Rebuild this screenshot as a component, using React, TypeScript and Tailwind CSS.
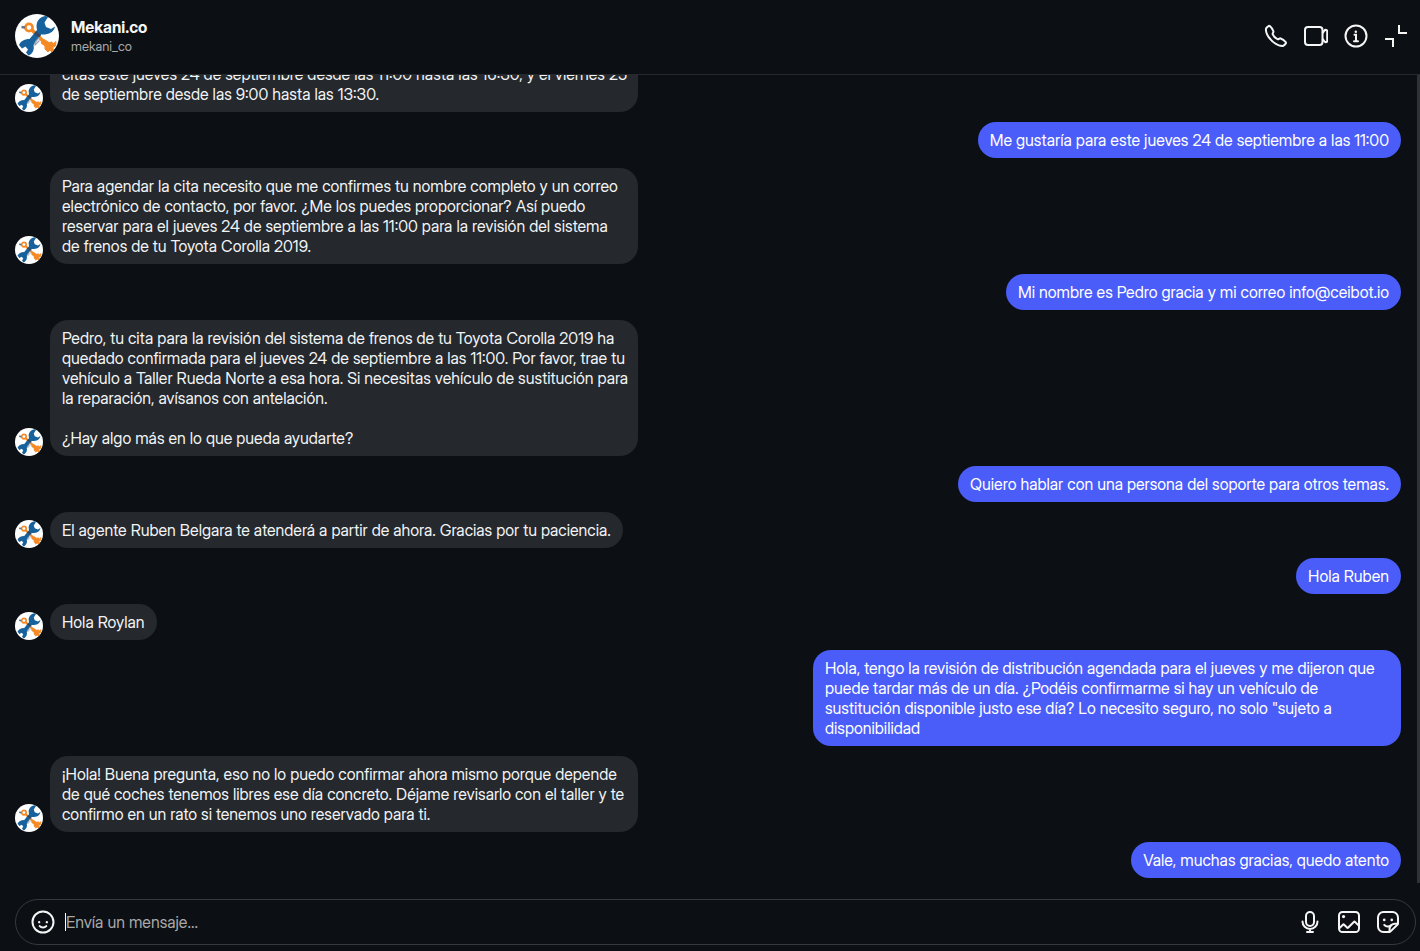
import React from "react";
import { clsx } from "clsx";

type Message = {
  from: "them" | "me";
  text: string;
  long?: boolean;
};

const messages: Message[] = [
  {
    from: "them",
    long: true,
    text: "citas este jueves 24 de septiembre desde las 11:00 hasta las 16:30, y el viernes 25\nde septiembre desde las 9:00 hasta las 13:30.",
  },
  { from: "me", text: "Me gustaría para este jueves 24 de septiembre a las 11:00" },
  {
    from: "them",
    long: true,
    text: "Para agendar la cita necesito que me confirmes tu nombre completo y un correo\nelectrónico de contacto, por favor. ¿Me los puedes proporcionar? Así puedo\nreservar para el jueves 24 de septiembre a las 11:00 para la revisión del sistema\nde frenos de tu Toyota Corolla 2019.",
  },
  { from: "me", text: "Mi nombre es Pedro gracia y mi correo info@ceibot.io" },
  {
    from: "them",
    long: true,
    text: "Pedro, tu cita para la revisión del sistema de frenos de tu Toyota Corolla 2019 ha\nquedado confirmada para el jueves 24 de septiembre a las 11:00. Por favor, trae tu\nvehículo a Taller Rueda Norte a esa hora. Si necesitas vehículo de sustitución para\nla reparación, avísanos con antelación.\n\n¿Hay algo más en lo que pueda ayudarte?",
  },
  { from: "me", text: "Quiero hablar con una persona del soporte para otros temas." },
  {
    from: "them",
    text: "El agente Ruben Belgara te atenderá a partir de ahora. Gracias por tu paciencia.",
  },
  { from: "me", text: "Hola Ruben" },
  { from: "them", text: "Hola Roylan" },
  {
    from: "me",
    long: true,
    text: 'Hola, tengo la revisión de distribución agendada para el jueves y me dijeron que\npuede tardar más de un día. ¿Podéis confirmarme si hay un vehículo de\nsustitución disponible justo ese día? Lo necesito seguro, no solo "sujeto a\ndisponibilidad',
  },
  {
    from: "them",
    long: true,
    text: "¡Hola! Buena pregunta, eso no lo puedo confirmar ahora mismo porque depende\nde qué coches tenemos libres ese día concreto. Déjame revisarlo con el taller y te\nconfirmo en un rato si tenemos uno reservado para ti.",
  },
  { from: "me", text: "Vale, muchas gracias, quedo atento" },
];

const Avatar = ({ className }: { className: string }) => (
  <svg viewBox="0 0 44 44" className={clsx("shrink-0 rounded-full bg-white", className)} aria-hidden="true">
    {/* orange wrench */}
    <g stroke="#f58a25" fill="none">
      <path d="M17 16 31 30" strokeWidth="3.5" />
      <circle cx="14" cy="13.5" r="3.6" strokeWidth="2.6" />
      <path d="M10 13.500 6.500 13" stroke="#6b7280" strokeWidth="2.5" />
      <path
        d="M26 29 29 25.500 34 28.500 37 28 38 30 41 27.500 40.500 32 37 34 39 35.500 37 38 35 36 33 38 30 35 30 32Z"
        fill="#f58a25"
        strokeWidth="1"
      />
    </g>
    {/* blue wrench */}
    <path
      d="M34 1.500C27 1.500 21.500 5.500 21.500 12L22 16 14.500 25C9 25 5.500 27.500 4 31L7 34.500 10.500 32.500 13 35.500 11 38.500 13.500 41.500C18 40 19.500 35 18.500 31L26 20.500C33 21 39 18.500 40 12.500L36 15 31 13 29.500 8.500Z"
      fill="#17629c"
    />
    <path d="M20 18.500 25 22.500" stroke="#37475a" strokeWidth="3" />
    <path d="M24.500 23C23 26 19 27 20 31L24.500 26.500" fill="none" stroke="#94a3b8" strokeWidth="1.3" />
  </svg>
);

const PhoneIcon = () => (
  <svg viewBox="0 0 24 24" className="size-6" fill="currentColor" aria-hidden="true">
    <path d="M18.227 22.912c-4.913 0-9.286-3.627-11.486-5.828C4.486 14.830.731 10.291.921 5.231a3.289 3.289 0 0 1 .908-2.138 17.116 17.116 0 0 1 1.865-1.710 2.307 2.307 0 0 1 3.004.174 13.283 13.283 0 0 1 3.658 5.325 2.551 2.551 0 0 1-.190 1.941l-.455.853a.463.463 0 0 0-.024.387 7.570 7.570 0 0 0 4.077 4.075.455.455 0 0 0 .386-.024l.853-.455a2.548 2.548 0 0 1 1.940-.190 13.278 13.278 0 0 1 5.326 3.658 2.309 2.309 0 0 1 .174 3.003 17.319 17.319 0 0 1-1.710 1.866 3.290 3.290 0 0 1-2.138.910 10.270 10.270 0 0 1-.368.006Zm-13.144-20a.270.270 0 0 0-.167.054A15.121 15.121 0 0 0 3.280 4.470a1.289 1.289 0 0 0-.360.836c-.161 4.301 3.210 8.340 5.235 10.364s6.060 5.403 10.366 5.236a1.284 1.284 0 0 0 .835-.360 15.217 15.217 0 0 0 1.504-1.637.324.324 0 0 0-.047-.410 11.620 11.620 0 0 0-4.457-3.119.545.545 0 0 0-.411.044l-.854.455a2.452 2.452 0 0 1-2.071.116 9.571 9.571 0 0 1-5.189-5.188 2.457 2.457 0 0 1 .115-2.071l.456-.855a.544.544 0 0 0 .043-.410 11.629 11.629 0 0 0-3.118-4.458.360.360 0 0 0-.244-.100Z" />
  </svg>
);

const VideoIcon = () => (
  <svg viewBox="0 0 24 24" className="size-6" fill="none" stroke="currentColor" strokeWidth="2" strokeLinejoin="round" aria-hidden="true">
    <rect x="1" y="3" width="17.500" height="18" rx="3" />
    <path d="m18.500 9.200 1.900-2.500a1.500 1.500 0 0 1 2.800 1v8.600a1.500 1.500 0 0 1-2.800 1l-1.900-2.500" />
  </svg>
);

const InfoIcon = () => (
  <svg viewBox="0 0 24 24" className="size-6" fill="none" stroke="currentColor" strokeWidth="2" strokeLinecap="round" aria-hidden="true">
    <circle cx="12" cy="12" r="10.500" />
    <circle cx="11.800" cy="7.700" r="1.250" fill="currentColor" stroke="none" />
    <path d="M10.500 10.800H12v6.400M10 17.200h4" />
  </svg>
);

const CollapseIcon = () => (
  <svg viewBox="0 0 24 24" className="size-6" fill="none" stroke="currentColor" strokeWidth="2" aria-hidden="true">
    <path d="M15 1v8h8M1 15h8v8" />
  </svg>
);

const EmojiIcon = () => (
  <svg viewBox="0 0 24 24" className="size-6" fill="currentColor" aria-hidden="true">
    <path d="M15.830 10.997a1.167 1.167 0 1 0 1.167 1.167 1.167 1.167 0 0 0-1.167-1.167Zm-6.500 1.167a1.167 1.167 0 1 0-1.166 1.167 1.167 1.167 0 0 0 1.166-1.167Zm5.163 3.240a3.406 3.406 0 0 1-4.982.007 1 1 0 1 0-1.557 1.256 5.397 5.397 0 0 0 8.090 0 1 1 0 0 0-1.550-1.263ZM12 .503a11.500 11.500 0 1 0 11.500 11.500A11.513 11.513 0 0 0 12 .503Zm0 21a9.500 9.500 0 1 1 9.500-9.500 9.510 9.510 0 0 1-9.500 9.500Z" />
  </svg>
);

const MicIcon = () => (
  <svg viewBox="0 0 24 24" className="size-6" fill="none" stroke="currentColor" strokeWidth="2" strokeLinecap="round" aria-hidden="true">
    <rect x="8" y="2" width="8" height="14" rx="4" />
    <path d="M4.500 11.500a7.500 7.500 0 0 0 15 0M12 19v3M9 22h6" />
  </svg>
);

const GalleryIcon = () => (
  <svg viewBox="0 0 24 24" className="size-6" fill="none" stroke="currentColor" strokeWidth="2" strokeLinejoin="round" aria-hidden="true">
    <circle cx="6.550" cy="6.570" r="1.560" fill="currentColor" stroke="none" />
    <path d="m2 18.605 3.901-3.900a.908.908 0 0 1 1.284 0l2.807 2.806a.908.908 0 0 0 1.283 0l5.534-5.534a.908.908 0 0 1 1.283 0l3.905 3.905" />
    <rect x="2" y="2" width="20" height="20" rx="3.560" />
  </svg>
);

const StickerIcon = () => (
  <svg viewBox="0 0 24 24" className="size-6" fill="none" stroke="currentColor" strokeWidth="2" strokeLinecap="round" strokeLinejoin="round" aria-hidden="true">
    <path d="M13.110 22H7.416A5.417 5.417 0 0 1 2 16.583V7.417A5.417 5.417 0 0 1 7.417 2h9.166A5.417 5.417 0 0 1 22 7.417v5.836a2.083 2.083 0 0 1-.626 1.488l-6.808 6.664A2.083 2.083 0 0 1 13.110 22Z" />
    <circle cx="8.240" cy="9.940" r="1.335" fill="currentColor" stroke="none" />
    <circle cx="15.760" cy="9.940" r="1.335" fill="currentColor" stroke="none" />
    <path d="M15.174 15.230a4.887 4.887 0 0 1-6.937-.301" />
    <path d="M22 10.833v1.629a1.250 1.250 0 0 1-1.250 1.250h-1.790a5.417 5.417 0 0 0-5.417 5.417v1.620a1.250 1.250 0 0 1-1.250 1.250H9.897" />
  </svg>
);

const Bubble = ({ message }: { message: Message }) => {
  const mine = message.from === "me";
  return (
    <li className={clsx("flex shrink-0 items-end gap-[7px]", mine && "justify-end")}>
      {!mine && <Avatar className="size-7" />}
      <p
        className={clsx(
          "max-w-[588px] whitespace-pre rounded-[18px] px-3 py-2 text-base leading-5",
          mine ? "bg-[#4a5df9] text-white" : "bg-[#25282c] text-[#f1f3f5]",
          message.long && "w-full"
        )}
      >
        {message.text}
      </p>
    </li>
  );
};

export default function App() {
  return (
    <div className="flex h-screen flex-col bg-[#0c1014] font-['Inter_Display','Inter','Liberation_Sans',sans-serif] text-[#f5f5f5]">
      {/* Header */}
      <header className="flex shrink-0 items-center border-b border-[#25282c] pt-[14px] pr-3 pb-4 pl-[15px]">
        <Avatar className="size-11" />
        <div className="ml-3">
          <h1 className="text-base leading-5 font-bold">Mekani.co</h1>
          <p className="text-[13px] leading-[18px] text-[#a8a8a8]">mekani_co</p>
        </div>
        <div className="ml-auto flex gap-4">
          <button type="button" aria-label="Llamada de audio">
            <PhoneIcon />
          </button>
          <button type="button" aria-label="Videollamada">
            <VideoIcon />
          </button>
          <button type="button" aria-label="Información">
            <InfoIcon />
          </button>
          <button type="button" aria-label="Contraer">
            <CollapseIcon />
          </button>
        </div>
      </header>

      {/* Conversation */}
      <main className="flex min-h-0 flex-1">
        <ul className="flex min-w-0 flex-1 flex-col justify-end gap-[10px] overflow-hidden pr-4 pb-[5px] pl-[15px]">
          {messages.map((message, i) => (
            <Bubble key={i} message={message} />
          ))}
        </ul>
        <div className="w-[3px] bg-[#2f3236]" />
      </main>

      {/* Composer */}
      <form className="mt-4 mr-1 mb-[6px] ml-[15px] flex h-[46px] shrink-0 items-center rounded-full border border-[#363a3f] px-[15px]">
        <button type="button" aria-label="Emoji">
          <EmojiIcon />
        </button>
        <span className="ml-[10px] h-[18px] w-px bg-white" />
        <input
          type="text"
          aria-label="Mensaje"
          placeholder="Envía un mensaje..."
          className="min-w-0 flex-1 bg-transparent text-base leading-5 outline-none placeholder:text-[#a8a8a8]"
        />
        <div className="flex gap-[15px]">
          <button type="button" aria-label="Clip de voz">
            <MicIcon />
          </button>
          <button type="button" aria-label="Añadir foto">
            <GalleryIcon />
          </button>
          <button type="button" aria-label="Sticker">
            <StickerIcon />
          </button>
        </div>
      </form>
    </div>
  );
}
